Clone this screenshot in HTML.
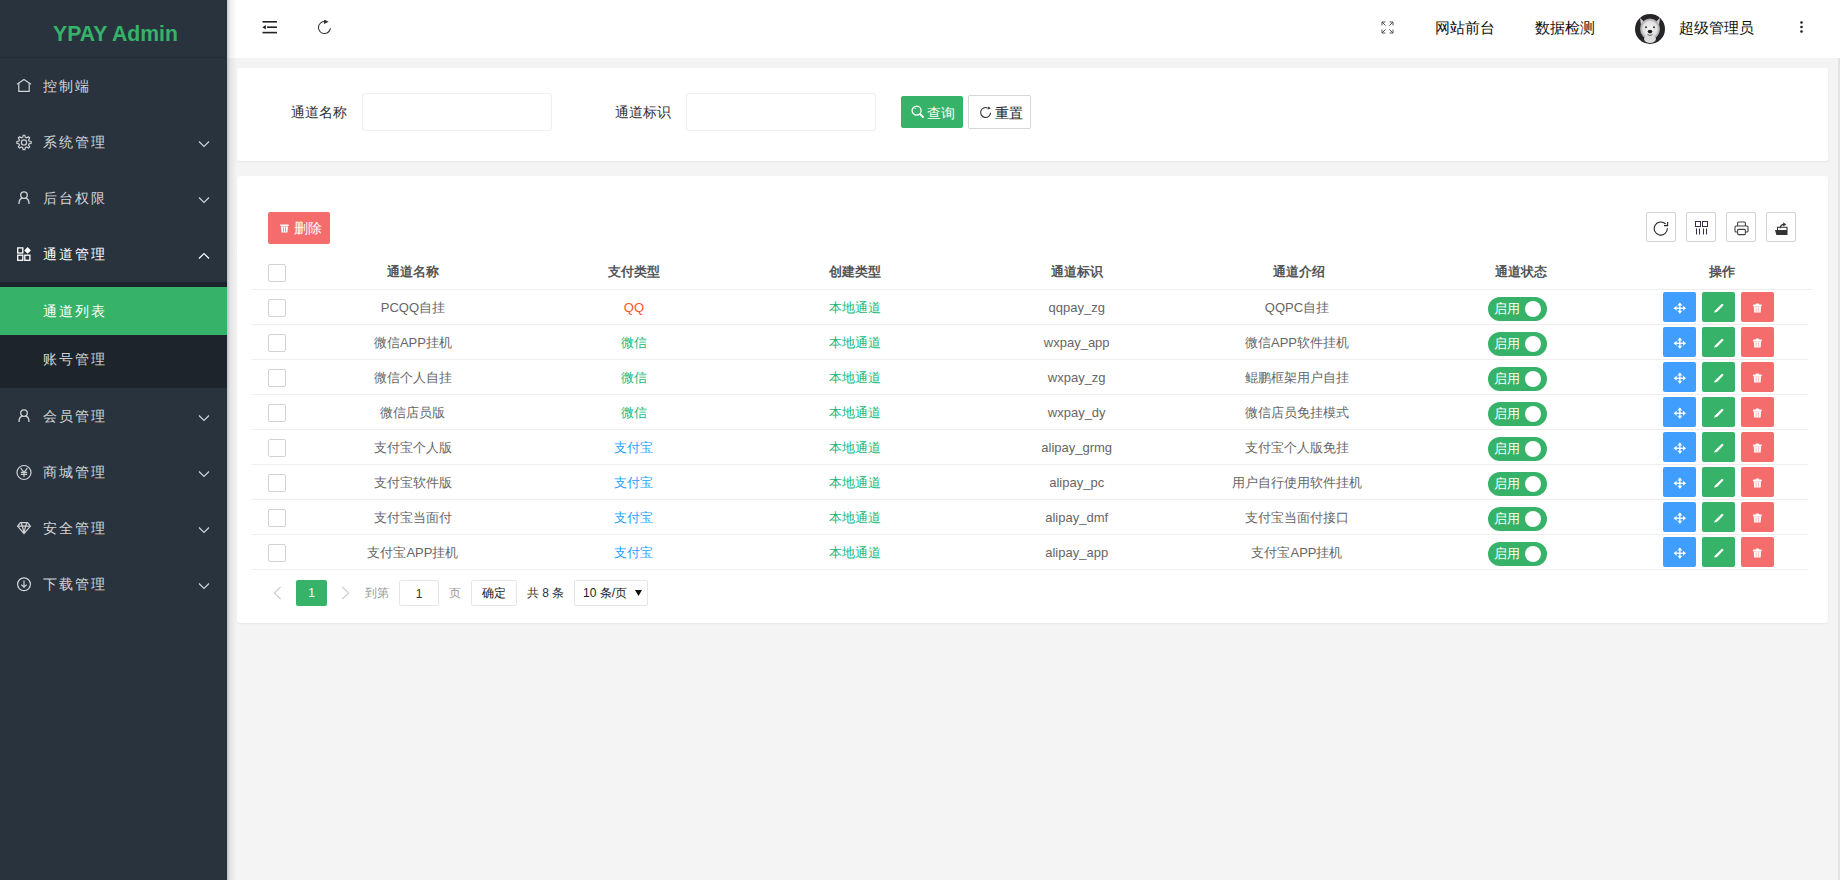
<!DOCTYPE html>
<html><head><meta charset="utf-8">
<style>
*{margin:0;padding:0;box-sizing:border-box}
html,body{width:1840px;height:880px;overflow:hidden}
body{font-family:"Liberation Sans",sans-serif;font-size:14px;color:#333;background:#f4f4f4;position:relative}
.abs{position:absolute}
.pg{font-size:12px;line-height:18px;white-space:nowrap}
.hd{font-size:15px;line-height:20px;color:#111}
#side{position:absolute;left:0;top:0;width:227px;height:880px;background:#28333e;z-index:3}
#logo{position:absolute;left:0;top:0;width:227px;height:58px;border-bottom:1px solid #232c35;color:#36b368;font-weight:bold;font-size:21.2px;text-align:center;line-height:68px;padding-left:4px}
.mi{position:absolute;left:0;width:227px;height:56px;color:rgba(255,255,255,.8);letter-spacing:2px;font-weight:500}
.mi .t{position:absolute;left:43px;top:0;line-height:56px}
.mi svg.ic{position:absolute;left:16px;top:20px}
.mi svg.ar{position:absolute;left:198px;top:26px}
#sub{position:absolute;left:0;top:282px;width:227px;height:106px;background:#1d242b}
.si{position:absolute;left:0;width:227px;height:48px;color:rgba(255,255,255,.8);letter-spacing:2px;font-weight:500}
.si .t{position:absolute;left:43px;line-height:48px}
#sideshadow{position:absolute;left:227px;top:0;width:10px;height:880px;background:linear-gradient(to right,rgba(30,40,55,.26),rgba(30,40,55,.08) 3px,rgba(0,0,0,0) 10px);z-index:2}
#header{position:absolute;left:227px;top:0;width:1613px;height:58px;background:#fff;z-index:1}
#rstrip{position:absolute;left:1838px;top:58px;width:2px;height:822px;background:#e4e4e4}
.card{position:absolute;left:237px;width:1591px;background:#fff;border-radius:3px;box-shadow:0 1px 2px rgba(0,0,0,.06)}
.lbl{position:absolute;line-height:20px}
.inp{position:absolute;height:38px;border:1px solid #eee;border-radius:3px;background:#fff}
.bt{line-height:32px;font-size:14px;font-weight:500;margin-top:1px}
.btn{position:absolute;height:32px;line-height:32px;font-size:14px;text-align:center;border-radius:2px}
.th{position:absolute;top:264px;font-weight:bold;color:#555;line-height:16px;font-size:13px}
.row{position:absolute;left:252px;width:1560px;height:1px;background:#eee}
.cell{position:absolute;color:#666;line-height:16px;white-space:nowrap;font-size:13px}
.cb{position:absolute;left:268px;width:18px;height:18px;border:1px solid #d2d2d2;border-radius:2px;background:#fff}
.sw{position:absolute;left:1488px;width:59px;height:24px;border-radius:12px;background:#36b368;color:#fff;font-size:14px}
.sw .st{position:absolute;left:6px;top:0;line-height:24px;font-size:13px;font-weight:500}
.sw .k{position:absolute;left:37px;top:4px;width:16px;height:16px;border-radius:50%;background:#fff}
.ab{position:absolute;width:33px;height:30px;border-radius:2px}
.ab svg{position:absolute}
.tb{position:absolute;top:212px;width:30px;height:30px;border:1px solid #d2d2d2;border-radius:2px;background:#fff}
.tb svg{position:absolute;left:6px;top:6px}
</style></head>
<body>
<div id="side">
  <div id="logo">YPAY Admin</div>
  <div class="mi" style="top:58px"><svg class="ic" width="18" height="18" viewBox="0 0 18 18" style="left:15px;top:19px" fill="none" stroke="#d0d3d6" stroke-width="1.2"><path d="M2 7.2 L9 2.4 L16 7.2"/><path d="M3.8 6.2 V14.4 H14.2 V6.2"/></svg><span class="t">控制端</span></div>
  <div class="mi" style="top:114px"><svg class="ic" width="18" height="18" viewBox="0 0 18 18" style="left:15px;top:19px" fill="none" stroke="#d0d3d6" stroke-width="1.2"><path d="M7.68 4.27 L8.10 2.26 L9.90 2.26 L10.32 4.27 L11.70 4.84 L13.41 3.71 L14.69 4.99 L13.56 6.70 L14.13 8.08 L16.14 8.50 L16.14 10.30 L14.13 10.72 L13.56 12.10 L14.69 13.81 L13.41 15.09 L11.70 13.96 L10.32 14.53 L9.90 16.54 L8.10 16.54 L7.68 14.53 L6.30 13.96 L4.59 15.09 L3.31 13.81 L4.44 12.10 L3.87 10.72 L1.86 10.30 L1.86 8.50 L3.87 8.08 L4.44 6.70 L3.31 4.99 L4.59 3.71 L6.30 4.84 Z" stroke-linejoin="round"/><circle cx="9" cy="9.4" r="2.6"/></svg><span class="t">系统管理</span><svg class="ar" width="12" height="8" viewBox="0 0 12 8" fill="none" stroke="#d0d3d6" stroke-width="1.2"><path d="M1 1.5 L6 6.5 L11 1.5"/></svg></div>
  <div class="mi" style="top:170px"><svg class="ic" width="18" height="18" viewBox="0 0 18 18" style="left:15px;top:19px" fill="none" stroke="#d0d3d6" stroke-width="1.3"><circle cx="9" cy="6.1" r="3.3"/><path d="M4 15 C4 11.3 6 9.4 7.6 9.2 M14 15 C14 11.3 12 9.4 10.4 9.2"/></svg><span class="t">后台权限</span><svg class="ar" width="12" height="8" viewBox="0 0 12 8" fill="none" stroke="#d0d3d6" stroke-width="1.2"><path d="M1 1.5 L6 6.5 L11 1.5"/></svg></div>
  <div class="mi" style="top:226px;color:#fff"><svg class="ic" width="18" height="18" viewBox="0 0 18 18" style="left:15px;top:19px"><g fill="none" stroke="#fff" stroke-width="1.3"><rect x="2.7" y="2.9" width="5.1" height="5.1"/><rect x="2.7" y="10.2" width="5.1" height="5.1"/><rect x="9.8" y="10.2" width="5.1" height="5.1"/></g><path d="M12.6 2 L15.9 5.4 L12.6 8.8 L9.3 5.4 Z" fill="#fff"/></svg><span class="t">通道管理</span><svg class="ar" width="12" height="8" viewBox="0 0 12 8" fill="none" stroke="#fff" stroke-width="1.2"><path d="M1 6.5 L6 1.5 L11 6.5"/></svg></div>
  <div id="sub">
    <div class="si" style="top:5px;background:#36b368;color:#fff"><span class="t">通道列表</span></div>
    <div class="si" style="top:53px"><span class="t">账号管理</span></div>
  </div>
  <div class="mi" style="top:388px"><svg class="ic" width="18" height="18" viewBox="0 0 18 18" style="left:15px;top:19px" fill="none" stroke="#d0d3d6" stroke-width="1.3"><circle cx="9" cy="6.1" r="3.3"/><path d="M4 15 C4 11.3 6 9.4 7.6 9.2 M14 15 C14 11.3 12 9.4 10.4 9.2"/></svg><span class="t">会员管理</span><svg class="ar" width="12" height="8" viewBox="0 0 12 8" fill="none" stroke="#d0d3d6" stroke-width="1.2"><path d="M1 1.5 L6 6.5 L11 1.5"/></svg></div>
  <div class="mi" style="top:444px"><svg class="ic" width="18" height="18" viewBox="0 0 18 18" style="left:15px;top:19px" fill="none" stroke="#d0d3d6" stroke-width="1.2"><circle cx="9" cy="9.5" r="7"/><path d="M5.6 5.2 L9 9.4 L12.4 5.2 M5.8 9.4 H12.2 M5.8 11.3 H12.2 M9 9.4 V14"/></svg><span class="t">商城管理</span><svg class="ar" width="12" height="8" viewBox="0 0 12 8" fill="none" stroke="#d0d3d6" stroke-width="1.2"><path d="M1 1.5 L6 6.5 L11 1.5"/></svg></div>
  <div class="mi" style="top:500px"><svg class="ic" width="18" height="18" viewBox="0 0 18 18" style="left:15px;top:19px" fill="none" stroke="#d0d3d6" stroke-width="1.2" stroke-linejoin="round"><path d="M5.4 3.6 H12.6 L15.4 7.2 L9 14.6 L2.6 7.2 Z"/><path d="M2.8 7.2 H15.2 M6.2 3.8 L7.4 7.2 L9 14 L10.6 7.2 L11.8 3.8"/></svg><span class="t">安全管理</span><svg class="ar" width="12" height="8" viewBox="0 0 12 8" fill="none" stroke="#d0d3d6" stroke-width="1.2"><path d="M1 1.5 L6 6.5 L11 1.5"/></svg></div>
  <div class="mi" style="top:556px"><svg class="ic" width="18" height="18" viewBox="0 0 18 18" style="left:15px;top:19px" fill="none" stroke="#d0d3d6" stroke-width="1.2"><circle cx="9" cy="9.3" r="6.4"/><path d="M9 5.6 V12 M6.3 9.6 L9 12.2 L11.7 9.6"/></svg><span class="t">下载管理</span><svg class="ar" width="12" height="8" viewBox="0 0 12 8" fill="none" stroke="#d0d3d6" stroke-width="1.2"><path d="M1 1.5 L6 6.5 L11 1.5"/></svg></div>
</div>
<div id="sideshadow"></div>
<div id="header">
  <svg class="abs" style="left:35px;top:20px" width="16" height="15" viewBox="0 0 16 15"><g fill="#222"><rect x="0.5" y="1" width="14.5" height="1.6"/><rect x="5" y="6.4" width="10" height="1.6"/><rect x="0.5" y="11.8" width="14.5" height="1.6"/><path d="M0.4 7.2 L3.8 4.9 L3.8 9.5 Z"/></g></svg>
  <svg class="abs" style="left:90px;top:20px" width="15" height="15" viewBox="0 0 15 15" fill="none" stroke="#333" stroke-width="1.1"><path d="M13.4 8.2 A6 6 0 1 1 8.2 1.6"/><path d="M7.6 0.4 L10.4 1.7 L7.6 3.2 Z" fill="#333"/></svg>
  <svg class="abs" style="left:1154px;top:21px" width="13" height="13" viewBox="0 0 13 13" fill="none" stroke="#555" stroke-width="1"><path d="M1 4.4 V1 H4.4 M1 1 L4.6 4.6 M8.6 1 H12 V4.4 M12 1 L8.4 4.6 M1 8.6 V12 H4.4 M1 12 L4.6 8.4 M12 8.6 V12 H8.6 M12 12 L8.4 8.4"/></svg>
  <span class="abs hd" style="left:1208px;top:18px">网站前台</span>
  <span class="abs hd" style="left:1308px;top:18px">数据检测</span>
  <svg class="abs" style="left:1408px;top:14px" width="30" height="30" viewBox="0 0 30 30"><defs><clipPath id="avc"><circle cx="15" cy="15" r="15"/></clipPath><radialGradient id="fur" cx="50%" cy="50%" r="50%"><stop offset="0" stop-color="#f4f4f4"/><stop offset="0.7" stop-color="#e2e2e2"/><stop offset="1" stop-color="#9a9a9a"/></radialGradient></defs><g clip-path="url(#avc)"><rect width="30" height="30" fill="#26262a"/><path d="M5 4 L9.5 8 L6 11 Z M25 4 L20.5 8 L24 11 Z" fill="#d9c9c9"/><ellipse cx="15" cy="15" rx="10" ry="10.5" fill="url(#fur)"/><ellipse cx="15" cy="25" rx="6" ry="4" fill="#dcdcdc"/><circle cx="11" cy="13.2" r="1" fill="#333"/><circle cx="19" cy="13.2" r="1" fill="#333"/><ellipse cx="15" cy="17.6" rx="2.3" ry="1.8" fill="#1a1a1a"/><path d="M12.5 20.5 Q15 22.5 17.5 20.5" stroke="#555" stroke-width="0.9" fill="none"/></g></svg>
  <span class="abs hd" style="left:1452px;top:18px">超级管理员</span>
  <svg class="abs" style="left:1573px;top:21px" width="3" height="12" viewBox="0 0 3 12" fill="#222"><circle cx="1.5" cy="1.5" r="1.3"/><circle cx="1.5" cy="6" r="1.3"/><circle cx="1.5" cy="10.5" r="1.3"/></svg>
</div>
<div id="rstrip"></div>
<div class="card" style="top:68px;height:93px"></div>
<div class="card" style="top:176px;height:447px"></div>

<!-- search card -->
<span class="lbl" style="left:291px;top:102px">通道名称</span>
<div class="inp" style="left:362px;top:93px;width:190px"></div>
<span class="lbl" style="left:615px;top:102px">通道标识</span>
<div class="inp" style="left:686px;top:93px;width:190px"></div>
<div class="btn" style="left:901px;top:96px;width:62px;background:#36b368;color:#fff"><svg class="abs" style="left:10px;top:9px" width="14" height="14" viewBox="0 0 14 14" fill="none" stroke="#fff" stroke-width="1.3"><circle cx="5.6" cy="5.6" r="4.5"/><path d="M8.8 8.8 L12.6 12.6" stroke-width="2"/><path d="M3.6 4 A2.4 2.4 0 0 1 5 2.9" stroke-width="0.9"/></svg><span class="abs bt" style="left:26px;top:0">查询</span></div>
<div class="btn" style="left:968px;top:95px;width:63px;height:34px;border:1px solid #d6d6d6;background:#fff;color:#222"><svg class="abs" style="left:10px;top:10px" width="13" height="13" viewBox="0 0 13 13" fill="none" stroke="#333" stroke-width="1.1"><path d="M11.6 6.8 A5 5 0 1 1 8.6 1.9"/><path d="M9.4 0.4 L11.8 2.6 L8.6 3.6 Z" fill="#333" stroke="none"/></svg><span class="abs bt" style="left:26px;top:0">重置</span></div>

<!-- table card -->
<div class="btn" style="left:268px;top:212px;width:62px;background:#f56c6c;color:#fff"><svg class="abs" style="left:12px;top:12px" width="9" height="9" viewBox="0 0 9 9" fill="#fff"><rect x="0" y="0.5" width="9" height="1.6" rx="0.8"/><path d="M1 2.6 H8 L7.4 8.6 H1.6 Z"/><g fill="#f56c6c"><rect x="3" y="3.4" width="0.8" height="4.4"/><rect x="5.2" y="3.4" width="0.8" height="4.4"/></g></svg><span class="abs bt" style="left:26px;top:-1px">删除</span></div>
<div class="tb" style="left:1646px"><svg width="16" height="16" viewBox="0 0 16 16" style="left:6px;top:8px" fill="none" stroke="#222" stroke-width="1.1"><path d="M14.4 7.2 A6.6 6.6 0 1 1 12.6 3"/><path d="M14.6 1 V4.6 H11" /></svg></div>
<div class="tb" style="left:1686px"><svg width="16" height="16" viewBox="0 0 16 16" style="left:7px;top:7px" fill="none" stroke="#3a2a4a" stroke-width="1"><rect x="1.5" y="1.5" width="5" height="5"/><rect x="8.5" y="1.5" width="5" height="5"/><path d="M2.5 8.5 V14.5 M5.5 8.5 V14.5 M9.5 8.5 V14.5 M12.5 8.5 V14.5"/></svg></div>
<div class="tb" style="left:1726px"><svg width="16" height="16" viewBox="0 0 16 16" style="left:7px;top:8px" fill="none" stroke="#444" stroke-width="1.1"><path d="M3.6 5 V2 Q3.6 1 4.6 1 H10.4 Q11.4 1 11.4 2 V5"/><path d="M3.6 11 H2 Q1 11 1 10 V6 Q1 5 2 5 H13 Q14 5 14 6 V10 Q14 11 13 11 H11.4"/><rect x="3.6" y="8.4" width="7.8" height="5.2" rx="1"/></svg></div>
<div class="tb" style="left:1766px"><svg width="16" height="16" viewBox="0 0 16 16" style="left:7px;top:8px"><path d="M1 9 H13.5 V14 H2.4 Z" fill="#333"/><path d="M3.5 9 V6.2 H13 V9" fill="none" stroke="#333" stroke-width="1.1"/><path d="M6 7.4 Q6.4 3.6 10 3.4" fill="none" stroke="#333" stroke-width="1.2"/><path d="M9.2 1.2 L12.2 3.4 L9.2 5.4 Z" fill="#333"/></svg></div>
<div class="cb" style="top:264px"></div>
<div class="th" style="left:312.9px;width:200px;text-align:center">通道名称</div>
<div class="th" style="left:533.9px;width:200px;text-align:center">支付类型</div>
<div class="th" style="left:754.9px;width:200px;text-align:center">创建类型</div>
<div class="th" style="left:976.7px;width:200px;text-align:center">通道标识</div>
<div class="th" style="left:1199.0px;width:200px;text-align:center">通道介绍</div>
<div class="th" style="left:1420.7px;width:200px;text-align:center">通道状态</div>
<div class="th" style="left:1621.6px;width:200px;text-align:center">操作</div>
<div class="row" style="top:289px"></div>
<div class="cb" style="top:299px"></div>
<div class="cell" style="left:312.9px;top:300px;width:200px;text-align:center;color:#666">PCQQ自挂</div>
<div class="cell" style="left:533.9px;top:300px;width:200px;text-align:center;color:#ff5722">QQ</div>
<div class="cell" style="left:754.9px;top:300px;width:200px;text-align:center;color:#16b777">本地通道</div>
<div class="cell" style="left:976.7px;top:300px;width:200px;text-align:center;color:#666">qqpay_zg</div>
<div class="cell" style="left:1197.0px;top:300px;width:200px;text-align:center;color:#666">QQPC自挂</div>
<div class="sw" style="top:297px"><span class="st">启用</span><span class="k"></span></div>
<div class="ab" style="left:1663px;top:292px;background:#409eff"><svg width="33" height="30" viewBox="0 0 33 30" style="left:0;top:0" fill="#fff"><rect x="11.8" y="15.6" width="10" height="1.3"/><rect x="16.2" y="11.4" width="1.3" height="9.8"/><path d="M14.4 13.6 L16.85 10.6 L19.3 13.6 Z M14.4 18.8 L16.85 21.8 L19.3 18.8 Z M13.6 13.8 L10.6 16.25 L13.6 18.7 Z M20 13.8 L23 16.25 L20 18.7 Z"/></svg></div>
<div class="ab" style="left:1702px;top:292px;background:#36b368"><svg width="33" height="30" viewBox="0 0 33 30" style="left:0;top:0"><path d="M20.2 13 L14.4 18.8" stroke="#fff" stroke-width="2.4" stroke-linecap="round"/><path d="M13.1 18.1 L12 20.7 L14.9 19.8 Z" fill="#fff"/></svg></div>
<div class="ab" style="left:1741px;top:292px;background:#f56c6c"><svg width="33" height="30" viewBox="0 0 33 30" style="left:0;top:0" fill="#fff"><rect x="11.9" y="12.6" width="9" height="2" rx="1"/><rect x="14.6" y="11.6" width="3.6" height="1.4" rx="0.7"/><path d="M12.8 14.6 H20 L19.7 20.6 H13.1 Z"/><g fill="#f9b0b0"><rect x="14.6" y="15.4" width="0.9" height="4.4"/><rect x="17.2" y="15.4" width="0.9" height="4.4"/></g></svg></div>
<div class="row" style="top:324px;width:1556px"></div>
<div class="cb" style="top:334px"></div>
<div class="cell" style="left:312.9px;top:335px;width:200px;text-align:center;color:#666">微信APP挂机</div>
<div class="cell" style="left:533.9px;top:335px;width:200px;text-align:center;color:#16b777">微信</div>
<div class="cell" style="left:754.9px;top:335px;width:200px;text-align:center;color:#16b777">本地通道</div>
<div class="cell" style="left:976.7px;top:335px;width:200px;text-align:center;color:#666">wxpay_app</div>
<div class="cell" style="left:1197.0px;top:335px;width:200px;text-align:center;color:#666">微信APP软件挂机</div>
<div class="sw" style="top:332px"><span class="st">启用</span><span class="k"></span></div>
<div class="ab" style="left:1663px;top:327px;background:#409eff"><svg width="33" height="30" viewBox="0 0 33 30" style="left:0;top:0" fill="#fff"><rect x="11.8" y="15.6" width="10" height="1.3"/><rect x="16.2" y="11.4" width="1.3" height="9.8"/><path d="M14.4 13.6 L16.85 10.6 L19.3 13.6 Z M14.4 18.8 L16.85 21.8 L19.3 18.8 Z M13.6 13.8 L10.6 16.25 L13.6 18.7 Z M20 13.8 L23 16.25 L20 18.7 Z"/></svg></div>
<div class="ab" style="left:1702px;top:327px;background:#36b368"><svg width="33" height="30" viewBox="0 0 33 30" style="left:0;top:0"><path d="M20.2 13 L14.4 18.8" stroke="#fff" stroke-width="2.4" stroke-linecap="round"/><path d="M13.1 18.1 L12 20.7 L14.9 19.8 Z" fill="#fff"/></svg></div>
<div class="ab" style="left:1741px;top:327px;background:#f56c6c"><svg width="33" height="30" viewBox="0 0 33 30" style="left:0;top:0" fill="#fff"><rect x="11.9" y="12.6" width="9" height="2" rx="1"/><rect x="14.6" y="11.6" width="3.6" height="1.4" rx="0.7"/><path d="M12.8 14.6 H20 L19.7 20.6 H13.1 Z"/><g fill="#f9b0b0"><rect x="14.6" y="15.4" width="0.9" height="4.4"/><rect x="17.2" y="15.4" width="0.9" height="4.4"/></g></svg></div>
<div class="row" style="top:359px;width:1556px"></div>
<div class="cb" style="top:369px"></div>
<div class="cell" style="left:312.9px;top:370px;width:200px;text-align:center;color:#666">微信个人自挂</div>
<div class="cell" style="left:533.9px;top:370px;width:200px;text-align:center;color:#16b777">微信</div>
<div class="cell" style="left:754.9px;top:370px;width:200px;text-align:center;color:#16b777">本地通道</div>
<div class="cell" style="left:976.7px;top:370px;width:200px;text-align:center;color:#666">wxpay_zg</div>
<div class="cell" style="left:1197.0px;top:370px;width:200px;text-align:center;color:#666">鲲鹏框架用户自挂</div>
<div class="sw" style="top:367px"><span class="st">启用</span><span class="k"></span></div>
<div class="ab" style="left:1663px;top:362px;background:#409eff"><svg width="33" height="30" viewBox="0 0 33 30" style="left:0;top:0" fill="#fff"><rect x="11.8" y="15.6" width="10" height="1.3"/><rect x="16.2" y="11.4" width="1.3" height="9.8"/><path d="M14.4 13.6 L16.85 10.6 L19.3 13.6 Z M14.4 18.8 L16.85 21.8 L19.3 18.8 Z M13.6 13.8 L10.6 16.25 L13.6 18.7 Z M20 13.8 L23 16.25 L20 18.7 Z"/></svg></div>
<div class="ab" style="left:1702px;top:362px;background:#36b368"><svg width="33" height="30" viewBox="0 0 33 30" style="left:0;top:0"><path d="M20.2 13 L14.4 18.8" stroke="#fff" stroke-width="2.4" stroke-linecap="round"/><path d="M13.1 18.1 L12 20.7 L14.9 19.8 Z" fill="#fff"/></svg></div>
<div class="ab" style="left:1741px;top:362px;background:#f56c6c"><svg width="33" height="30" viewBox="0 0 33 30" style="left:0;top:0" fill="#fff"><rect x="11.9" y="12.6" width="9" height="2" rx="1"/><rect x="14.6" y="11.6" width="3.6" height="1.4" rx="0.7"/><path d="M12.8 14.6 H20 L19.7 20.6 H13.1 Z"/><g fill="#f9b0b0"><rect x="14.6" y="15.4" width="0.9" height="4.4"/><rect x="17.2" y="15.4" width="0.9" height="4.4"/></g></svg></div>
<div class="row" style="top:394px;width:1556px"></div>
<div class="cb" style="top:404px"></div>
<div class="cell" style="left:312.9px;top:405px;width:200px;text-align:center;color:#666">微信店员版</div>
<div class="cell" style="left:533.9px;top:405px;width:200px;text-align:center;color:#16b777">微信</div>
<div class="cell" style="left:754.9px;top:405px;width:200px;text-align:center;color:#16b777">本地通道</div>
<div class="cell" style="left:976.7px;top:405px;width:200px;text-align:center;color:#666">wxpay_dy</div>
<div class="cell" style="left:1197.0px;top:405px;width:200px;text-align:center;color:#666">微信店员免挂模式</div>
<div class="sw" style="top:402px"><span class="st">启用</span><span class="k"></span></div>
<div class="ab" style="left:1663px;top:397px;background:#409eff"><svg width="33" height="30" viewBox="0 0 33 30" style="left:0;top:0" fill="#fff"><rect x="11.8" y="15.6" width="10" height="1.3"/><rect x="16.2" y="11.4" width="1.3" height="9.8"/><path d="M14.4 13.6 L16.85 10.6 L19.3 13.6 Z M14.4 18.8 L16.85 21.8 L19.3 18.8 Z M13.6 13.8 L10.6 16.25 L13.6 18.7 Z M20 13.8 L23 16.25 L20 18.7 Z"/></svg></div>
<div class="ab" style="left:1702px;top:397px;background:#36b368"><svg width="33" height="30" viewBox="0 0 33 30" style="left:0;top:0"><path d="M20.2 13 L14.4 18.8" stroke="#fff" stroke-width="2.4" stroke-linecap="round"/><path d="M13.1 18.1 L12 20.7 L14.9 19.8 Z" fill="#fff"/></svg></div>
<div class="ab" style="left:1741px;top:397px;background:#f56c6c"><svg width="33" height="30" viewBox="0 0 33 30" style="left:0;top:0" fill="#fff"><rect x="11.9" y="12.6" width="9" height="2" rx="1"/><rect x="14.6" y="11.6" width="3.6" height="1.4" rx="0.7"/><path d="M12.8 14.6 H20 L19.7 20.6 H13.1 Z"/><g fill="#f9b0b0"><rect x="14.6" y="15.4" width="0.9" height="4.4"/><rect x="17.2" y="15.4" width="0.9" height="4.4"/></g></svg></div>
<div class="row" style="top:429px;width:1556px"></div>
<div class="cb" style="top:439px"></div>
<div class="cell" style="left:312.9px;top:440px;width:200px;text-align:center;color:#666">支付宝个人版</div>
<div class="cell" style="left:533.9px;top:440px;width:200px;text-align:center;color:#1e9fff">支付宝</div>
<div class="cell" style="left:754.9px;top:440px;width:200px;text-align:center;color:#16b777">本地通道</div>
<div class="cell" style="left:976.7px;top:440px;width:200px;text-align:center;color:#666">alipay_grmg</div>
<div class="cell" style="left:1197.0px;top:440px;width:200px;text-align:center;color:#666">支付宝个人版免挂</div>
<div class="sw" style="top:437px"><span class="st">启用</span><span class="k"></span></div>
<div class="ab" style="left:1663px;top:432px;background:#409eff"><svg width="33" height="30" viewBox="0 0 33 30" style="left:0;top:0" fill="#fff"><rect x="11.8" y="15.6" width="10" height="1.3"/><rect x="16.2" y="11.4" width="1.3" height="9.8"/><path d="M14.4 13.6 L16.85 10.6 L19.3 13.6 Z M14.4 18.8 L16.85 21.8 L19.3 18.8 Z M13.6 13.8 L10.6 16.25 L13.6 18.7 Z M20 13.8 L23 16.25 L20 18.7 Z"/></svg></div>
<div class="ab" style="left:1702px;top:432px;background:#36b368"><svg width="33" height="30" viewBox="0 0 33 30" style="left:0;top:0"><path d="M20.2 13 L14.4 18.8" stroke="#fff" stroke-width="2.4" stroke-linecap="round"/><path d="M13.1 18.1 L12 20.7 L14.9 19.8 Z" fill="#fff"/></svg></div>
<div class="ab" style="left:1741px;top:432px;background:#f56c6c"><svg width="33" height="30" viewBox="0 0 33 30" style="left:0;top:0" fill="#fff"><rect x="11.9" y="12.6" width="9" height="2" rx="1"/><rect x="14.6" y="11.6" width="3.6" height="1.4" rx="0.7"/><path d="M12.8 14.6 H20 L19.7 20.6 H13.1 Z"/><g fill="#f9b0b0"><rect x="14.6" y="15.4" width="0.9" height="4.4"/><rect x="17.2" y="15.4" width="0.9" height="4.4"/></g></svg></div>
<div class="row" style="top:464px;width:1556px"></div>
<div class="cb" style="top:474px"></div>
<div class="cell" style="left:312.9px;top:475px;width:200px;text-align:center;color:#666">支付宝软件版</div>
<div class="cell" style="left:533.9px;top:475px;width:200px;text-align:center;color:#1e9fff">支付宝</div>
<div class="cell" style="left:754.9px;top:475px;width:200px;text-align:center;color:#16b777">本地通道</div>
<div class="cell" style="left:976.7px;top:475px;width:200px;text-align:center;color:#666">alipay_pc</div>
<div class="cell" style="left:1197.0px;top:475px;width:200px;text-align:center;color:#666">用户自行使用软件挂机</div>
<div class="sw" style="top:472px"><span class="st">启用</span><span class="k"></span></div>
<div class="ab" style="left:1663px;top:467px;background:#409eff"><svg width="33" height="30" viewBox="0 0 33 30" style="left:0;top:0" fill="#fff"><rect x="11.8" y="15.6" width="10" height="1.3"/><rect x="16.2" y="11.4" width="1.3" height="9.8"/><path d="M14.4 13.6 L16.85 10.6 L19.3 13.6 Z M14.4 18.8 L16.85 21.8 L19.3 18.8 Z M13.6 13.8 L10.6 16.25 L13.6 18.7 Z M20 13.8 L23 16.25 L20 18.7 Z"/></svg></div>
<div class="ab" style="left:1702px;top:467px;background:#36b368"><svg width="33" height="30" viewBox="0 0 33 30" style="left:0;top:0"><path d="M20.2 13 L14.4 18.8" stroke="#fff" stroke-width="2.4" stroke-linecap="round"/><path d="M13.1 18.1 L12 20.7 L14.9 19.8 Z" fill="#fff"/></svg></div>
<div class="ab" style="left:1741px;top:467px;background:#f56c6c"><svg width="33" height="30" viewBox="0 0 33 30" style="left:0;top:0" fill="#fff"><rect x="11.9" y="12.6" width="9" height="2" rx="1"/><rect x="14.6" y="11.6" width="3.6" height="1.4" rx="0.7"/><path d="M12.8 14.6 H20 L19.7 20.6 H13.1 Z"/><g fill="#f9b0b0"><rect x="14.6" y="15.4" width="0.9" height="4.4"/><rect x="17.2" y="15.4" width="0.9" height="4.4"/></g></svg></div>
<div class="row" style="top:499px;width:1556px"></div>
<div class="cb" style="top:509px"></div>
<div class="cell" style="left:312.9px;top:510px;width:200px;text-align:center;color:#666">支付宝当面付</div>
<div class="cell" style="left:533.9px;top:510px;width:200px;text-align:center;color:#1e9fff">支付宝</div>
<div class="cell" style="left:754.9px;top:510px;width:200px;text-align:center;color:#16b777">本地通道</div>
<div class="cell" style="left:976.7px;top:510px;width:200px;text-align:center;color:#666">alipay_dmf</div>
<div class="cell" style="left:1197.0px;top:510px;width:200px;text-align:center;color:#666">支付宝当面付接口</div>
<div class="sw" style="top:507px"><span class="st">启用</span><span class="k"></span></div>
<div class="ab" style="left:1663px;top:502px;background:#409eff"><svg width="33" height="30" viewBox="0 0 33 30" style="left:0;top:0" fill="#fff"><rect x="11.8" y="15.6" width="10" height="1.3"/><rect x="16.2" y="11.4" width="1.3" height="9.8"/><path d="M14.4 13.6 L16.85 10.6 L19.3 13.6 Z M14.4 18.8 L16.85 21.8 L19.3 18.8 Z M13.6 13.8 L10.6 16.25 L13.6 18.7 Z M20 13.8 L23 16.25 L20 18.7 Z"/></svg></div>
<div class="ab" style="left:1702px;top:502px;background:#36b368"><svg width="33" height="30" viewBox="0 0 33 30" style="left:0;top:0"><path d="M20.2 13 L14.4 18.8" stroke="#fff" stroke-width="2.4" stroke-linecap="round"/><path d="M13.1 18.1 L12 20.7 L14.9 19.8 Z" fill="#fff"/></svg></div>
<div class="ab" style="left:1741px;top:502px;background:#f56c6c"><svg width="33" height="30" viewBox="0 0 33 30" style="left:0;top:0" fill="#fff"><rect x="11.9" y="12.6" width="9" height="2" rx="1"/><rect x="14.6" y="11.6" width="3.6" height="1.4" rx="0.7"/><path d="M12.8 14.6 H20 L19.7 20.6 H13.1 Z"/><g fill="#f9b0b0"><rect x="14.6" y="15.4" width="0.9" height="4.4"/><rect x="17.2" y="15.4" width="0.9" height="4.4"/></g></svg></div>
<div class="row" style="top:534px;width:1556px"></div>
<div class="cb" style="top:544px"></div>
<div class="cell" style="left:312.9px;top:545px;width:200px;text-align:center;color:#666">支付宝APP挂机</div>
<div class="cell" style="left:533.9px;top:545px;width:200px;text-align:center;color:#1e9fff">支付宝</div>
<div class="cell" style="left:754.9px;top:545px;width:200px;text-align:center;color:#16b777">本地通道</div>
<div class="cell" style="left:976.7px;top:545px;width:200px;text-align:center;color:#666">alipay_app</div>
<div class="cell" style="left:1197.0px;top:545px;width:200px;text-align:center;color:#666">支付宝APP挂机</div>
<div class="sw" style="top:542px"><span class="st">启用</span><span class="k"></span></div>
<div class="ab" style="left:1663px;top:537px;background:#409eff"><svg width="33" height="30" viewBox="0 0 33 30" style="left:0;top:0" fill="#fff"><rect x="11.8" y="15.6" width="10" height="1.3"/><rect x="16.2" y="11.4" width="1.3" height="9.8"/><path d="M14.4 13.6 L16.85 10.6 L19.3 13.6 Z M14.4 18.8 L16.85 21.8 L19.3 18.8 Z M13.6 13.8 L10.6 16.25 L13.6 18.7 Z M20 13.8 L23 16.25 L20 18.7 Z"/></svg></div>
<div class="ab" style="left:1702px;top:537px;background:#36b368"><svg width="33" height="30" viewBox="0 0 33 30" style="left:0;top:0"><path d="M20.2 13 L14.4 18.8" stroke="#fff" stroke-width="2.4" stroke-linecap="round"/><path d="M13.1 18.1 L12 20.7 L14.9 19.8 Z" fill="#fff"/></svg></div>
<div class="ab" style="left:1741px;top:537px;background:#f56c6c"><svg width="33" height="30" viewBox="0 0 33 30" style="left:0;top:0" fill="#fff"><rect x="11.9" y="12.6" width="9" height="2" rx="1"/><rect x="14.6" y="11.6" width="3.6" height="1.4" rx="0.7"/><path d="M12.8 14.6 H20 L19.7 20.6 H13.1 Z"/><g fill="#f9b0b0"><rect x="14.6" y="15.4" width="0.9" height="4.4"/><rect x="17.2" y="15.4" width="0.9" height="4.4"/></g></svg></div>
<div class="row" style="top:569px;width:1556px"></div>

<!-- pagination -->
<svg class="abs" style="left:273px;top:586px" width="9" height="14" viewBox="0 0 9 14" fill="none" stroke="#cfcfcf" stroke-width="1.2"><path d="M7.6 1 L1.4 7 L7.6 13"/></svg>
<div class="abs" style="left:296px;top:580px;width:31px;height:26px;background:#36b368;border-radius:2px;color:#fff;font-size:12px;line-height:26px;text-align:center">1</div>
<svg class="abs" style="left:341px;top:586px" width="9" height="14" viewBox="0 0 9 14" fill="none" stroke="#cfcfcf" stroke-width="1.2"><path d="M1.4 1 L7.6 7 L1.4 13"/></svg>
<span class="abs pg" style="left:365px;top:584px;color:#999">到第</span>
<div class="abs" style="left:399px;top:580px;width:40px;height:26px;border:1px solid #e6e6e6;border-radius:2px;font-size:12px;line-height:26px;text-align:center;color:#333">1</div>
<span class="abs pg" style="left:449px;top:584px;color:#999">页</span>
<div class="abs" style="left:471px;top:580px;width:46px;height:26px;border:1px solid #e6e6e6;border-radius:2px;font-size:12px;line-height:24px;text-align:center;color:#222">确定</div>
<span class="abs pg" style="left:527px;top:584px;color:#333">共 8 条</span>
<div class="abs" style="left:574px;top:580px;width:74px;height:26px;border:1px solid #e6e6e6;border-radius:2px;font-size:12px;line-height:24px;color:#222"><span class="abs" style="left:8px;top:0">10 条/页</span><svg class="abs" style="left:60px;top:9px" width="7" height="6" viewBox="0 0 7 6" fill="#111"><path d="M0 0 H7 L3.5 6 Z"/></svg></div>
</body></html>
